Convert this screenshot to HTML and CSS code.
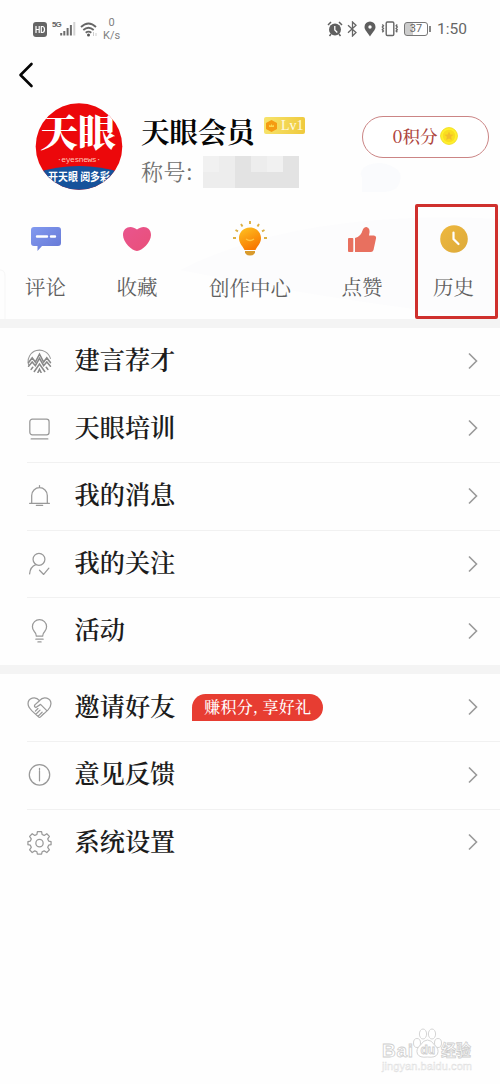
FILE: index.html
```html
<!DOCTYPE html>
<html lang="zh-CN">
<head>
<meta charset="utf-8">
<title>天眼会员</title>
<link rel="stylesheet" href="styles.css">
</head>
<body>
<main class="screen">
  <header class="status">
    <svg class="hd" width="14" height="15" viewBox="0 0 14 15"><rect width="14" height="15" rx="3" fill="#656565"/><path d="M3 4v7M6.200 4v7M3 7.500h3.200M8.300 4.500v6h1q2.200 0 2.200-3t-2.200-3z" fill="none" stroke="#fff" stroke-width="1.200"/></svg>
    <span class="net">5G</span>
    <svg class="signal" width="16" height="14" viewBox="0 0 16 14"><path d="M1.200 11v2.500M4.300 9v4.500M7.600 6v7.500M10.900 3v10.500" stroke="#6c6c6c" stroke-width="2"/><path d="M14.300 0v13.500" stroke="#d2d2d2" stroke-width="2"/></svg>
    <svg class="wifi" width="18" height="15" viewBox="0 0 18 15"><g fill="none" stroke="#666" stroke-width="1.800"><path d="M1 5q7.500-7 15 0M3.300 8q5.200-4.500 10.400 0M5.700 10.800q2.800-2.300 5.600 0"/></g><circle cx="8.500" cy="13" r="1.500" fill="#555"/><path d="M13.500 10v4M16 11v3" stroke="#ccc"/></svg>
    <span class="speed"><span>0</span><span>K/s</span></span>
    <span class="status-right">
      <svg width="16" height="16" viewBox="0 0 16 16"><circle cx="8" cy="8.500" r="6" fill="#606060"/><path d="M1 4l3-3M15 4l-3-3M4 13l-1.500 2M12 13l1.500 2" stroke="#606060" stroke-width="1.500"/><path d="M7.800 5v4l2.500 2.500" fill="none" stroke="#fff" stroke-width="1.300"/></svg>
      <svg class="bt" width="11" height="16" viewBox="0 0 11 16"><path d="M1 4.300l8 7.200-3.500 3.500V1l3.500 3.300-8 7.400" fill="none" stroke="#666" stroke-width="1.300"/></svg>
      <svg class="pin" width="12" height="16" viewBox="0 0 12 16"><path d="M6 .5a5.500 5.500 0 0 1 5.500 5.500C11.500 9 8 12 6 15.500 4 12 .5 9 .5 6A5.500 5.500 0 0 1 6 .5z" fill="#5e5e5e"/><circle cx="6" cy="6" r="1.700" fill="#fff"/></svg>
      <svg class="vibrate" width="18" height="16" viewBox="0 0 18 16"><rect x="5.200" y="1" width="7.600" height="13.500" rx="1.200" fill="none" stroke="#666" stroke-width="1.400"/><path d="M1.300 3.500l1.200 1.300-1.200 1.300 1.200 1.300-1.200 1.300 1.200 1.300-1.200 1.300M16.300 3.500l-1.200 1.300 1.200 1.300-1.200 1.300 1.200 1.300-1.200 1.300 1.200 1.300" fill="none" stroke="#666" stroke-width="1.300"/></svg>
      <span class="battery">37</span><i class="battery-tip"></i>
      <span class="time">1:50</span>
    </span>
  </header>

  <nav class="back"><svg width="16" height="26" viewBox="0 0 16 26"><path d="M13.500 2L2.500 13l11 11" fill="none" stroke="#050505" stroke-width="2.600" stroke-linecap="round" stroke-linejoin="round"/></svg></nav>

  <section class="profile">
    <svg class="avatar" width="88" height="88" viewBox="0 0 88 88">
      <defs><clipPath id="disc"><circle cx="44" cy="43.500" r="43.300"/></clipPath></defs>
      <g clip-path="url(#disc)"><rect width="88" height="88" fill="#ec080b"/><path d="M0 70Q44 56 88 70V88H0z" fill="#16529b"/>
      <text class="brand" x="5" y="43" textLength="76">天眼</text>
      <text class="news" x="22" y="59" textLength="44">·eyesnews·</text>
      <text class="slogan" x="13" y="78" textLength="62" lengthAdjust="spacingAndGlyphs">开天眼 阅多彩</text></g>
    </svg>
    <div class="who">
      <div class="name-line"><h1>天眼会员</h1>
        <span class="level"><svg width="11" height="12" viewBox="0 0 11 12"><path d="M5.500 0L11 3v6l-5.500 3L0 9V3z" fill="#f59b12"/><path d="M3 7V4.800l1.400 1L5.500 4l1.100 1.800L8 4.800V7z" fill="#fbd64a"/></svg>Lv1</span></div>
      <div class="title-line"><span>称号:</span>
        <span class="mosaic"><i></i><i></i><i></i><i></i><i></i><i></i><i></i><i></i><i></i><i></i><i></i><i></i></span></div>
    </div>
    <div class="points"><span>0积分</span><svg width="18" height="18" viewBox="0 0 18 18"><circle cx="9" cy="9" r="8.400" fill="#fff02c" stroke="#f2df2a"/><circle cx="9" cy="9" r="6.200" fill="#f9dd20"/><path d="M9 4.500l1.300 2.900 3.200.3-2.400 2.100.7 3.200L9 11.400 6.200 13l.7-3.200-2.400-2.100 3.200-.3z" fill="#f3bd2b"/></svg></div>
  </section>

  <section class="tabs">
    <svg class="scenery" width="500" height="130" viewBox="0 0 500 130"><path d="M180 66Q300 5 500 15V115Q350 100 180 66z" fill="#fcfcfd"/><path d="M362-12V-26Q358-34 368-39Q382-44 393-37Q404-32 399-20Q396-12 381-12z" fill="#fafbfd"/><path d="M0 66q5 0 5 6v43" fill="none" stroke="#f6f6f6"/></svg>
    <a class="tab"><svg width="32" height="26" viewBox="0 0 32 26"><defs><linearGradient id="blue" x2="1" y2="1"><stop stop-color="#829af0"/><stop offset="1" stop-color="#6577d4"/></linearGradient></defs><path d="M4 1h24q3 0 3 3v13q0 3-3 3H12l-4.500 5V20H4q-3 0-3-3V4q0-3 3-3z" fill="url(#blue)"/><path d="M7 10.500h10M21 10.500h4" stroke="#fff" stroke-width="2.400" stroke-linecap="round"/></svg><span>评论</span></a>
    <a class="tab"><svg width="30" height="26" viewBox="0 0 30 26"><defs><linearGradient id="pink" x2="1" y2="1"><stop stop-color="#e9558e"/><stop offset="1" stop-color="#e94f79"/></linearGradient></defs><path d="M15 3.500C21-1.500 29 1 29 9c0 7-9 16-14 16S1 16 1 9C1 1 9-1.500 15 3.500z" fill="url(#pink)"/></svg><span>收藏</span></a>
    <a class="tab center"><svg width="36" height="36" viewBox="0 0 36 36"><defs><linearGradient id="orange" x2=".5" y2="1"><stop stop-color="#ffc423"/><stop offset="1" stop-color="#f87900"/></linearGradient></defs><path d="M18 6.500c7 0 11 5.300 11 10.500 0 5.500-3.500 7.500-5.500 12h-11c-2-4.500-5.500-6.500-5.500-12C7 11.800 11 6.500 18 6.500z" fill="url(#orange)"/><path d="M14 18q4 3 8 0" fill="none" stroke="#ffc642" stroke-width="1.300"/><path d="M13 30h10v1.500q-1 3-5 3t-5-3z" fill="#d99a2c"/><path d="M1 17h3M32 17h3M3.500 9l2.500 1.300M32.500 9L30 10.300M9 3l1.500 2.500M27 3l-1.500 2.500M18 0v3" stroke="#ddb044" stroke-width="1.900"/></svg><span>创作中心</span></a>
    <a class="tab"><svg width="30" height="28" viewBox="0 0 30 28"><path d="M2 13h3.500q.8 0 .8 1v12q0 1-.8 1H2q-1 0-1-1V14q0-1 1-1zM8 13q6-1.500 7.500-7.500Q16.500 2 19.500 2q4.500 1 2.500 8.500h5q2.500.5 2 3L26.500 25q-.7 2-2.500 2H8z" fill="#e8705f"/></svg><span>点赞</span></a>
    <a class="tab history"><svg width="28" height="28" viewBox="0 0 28 28"><defs><linearGradient id="gold" x2="1" y2="1"><stop stop-color="#eeb83e"/><stop offset="1" stop-color="#ddaa3b"/></linearGradient></defs><circle cx="14" cy="14" r="13.800" fill="url(#gold)"/><path d="M13.500 7.500V14l5 5" fill="none" stroke="#fff" stroke-width="2.200" stroke-linecap="round"/></svg><span>历史</span></a>
  </section>

  <section class="menu">
    <a class="row"><svg class="glyph" viewBox="0 0 24 24"><path d="M1.500 16A10.700 10.700 0 1 1 22.500 10" fill="none" stroke="#999" stroke-width="1"/><g fill="none" stroke="#888" stroke-width="1.500" stroke-linejoin="miter"><path d="M1.500 14l3.500-4.500 3 4L12 6l4 7.500 3-4 3.500 4.500M1.500 17.500L5 13.500l3 3.500 4-7 4 7 3-3.500 3.500 4M4 20.500l1.500-2M7 22.500l5-7 5 7M10.500 23.500l1.500-3 1.500 3M20 20.500l-1.500-2"/></g></svg><span>建言荐才</span><svg class="arrow" viewBox="0 0 10 18"><path d="M1 1.500L8.500 9 1 16.500"/></svg></a>
    <a class="row"><svg class="glyph" viewBox="0 0 24 24"><rect x="2.700" y="3" width="18.500" height="15" rx="2.500"/><path d="M4 22h16"/></svg><span>天眼培训</span><svg class="arrow" viewBox="0 0 10 18"><path d="M1 1.500L8.500 9 1 16.500"/></svg></a>
    <a class="row"><svg class="glyph" viewBox="0 0 24 24"><path d="M4.500 19.500V12a7.500 7.500 0 0 1 15 0v7.500M2.500 19.500h19M12 2.500v2M9 21.500h6"/></svg><span>我的消息</span><svg class="arrow" viewBox="0 0 10 18"><path d="M1 1.500L8.500 9 1 16.500"/></svg></a>
    <a class="row"><svg class="glyph" viewBox="0 0 24 24"><circle cx="11.500" cy="8" r="5.700"/><path d="M2.500 22q.5-7 6-9M12 18.500l4 4 5-6"/></svg><span>我的关注</span><svg class="arrow" viewBox="0 0 10 18"><path d="M1 1.500L8.500 9 1 16.500"/></svg></a>
    <a class="row"><svg class="glyph" viewBox="0 0 24 24"><path d="M9 17.500q0-2.500-2-4.500A6.800 6.800 0 1 1 17 13q-2 2-2 4.500zM8.500 20.300h7M10.500 23h3"/></svg><span>活动</span><svg class="arrow" viewBox="0 0 10 18"><path d="M1 1.500L8.500 9 1 16.500"/></svg></a>
  </section>

  <section class="menu second">
    <a class="row"><svg class="glyph" viewBox="0 0 24 24"><path d="M12 5.500C8 .5 1 3 1 8.500c0 3 2 5 4 7l6 5.500q1 1 2 0l7-6.500c2-2 3-4 3-6 0-5.500-7-8-11-3L7.500 9.500q-1 2 1 2.500L13 9l6 6M8 15.500l2.500-2.500M8.500 18.500l4-4M10.500 20.500l4-4M13 21l3-3"/></svg><span>邀请好友</span><em>赚积分, 享好礼</em><svg class="arrow" viewBox="0 0 10 18"><path d="M1 1.500L8.500 9 1 16.500"/></svg></a>
    <a class="row"><svg class="glyph" viewBox="0 0 24 24"><circle cx="12" cy="12.300" r="9.800"/><path d="M12 6v1.500M12 8.500v9.500"/></svg><span>意见反馈</span><svg class="arrow" viewBox="0 0 10 18"><path d="M1 1.500L8.500 9 1 16.500"/></svg></a>
    <a class="row"><svg class="glyph" viewBox="0 0 24 24"><path d="M10 1.500h4l.5 2.800 2 .9 2.500-1.600 2.500 2.500-1.600 2.500.9 2 2.300.5v3l-2.300.5-.9 2 1.600 2.500-2.500 2.500-2.500-1.600-2 .9-.5 2.300h-4l-.5-2.300-2-.9L5 21.600l-2.500-2.500 1.600-2.500-.9-2-2.300-.5v-3l2.300-.5.9-2-1.600-2.500L5 3.600l2.500 1.600 2-.9z"/><circle cx="12" cy="12.600" r="3.500"/></svg><span>系统设置</span><svg class="arrow" viewBox="0 0 10 18"><path d="M1 1.500L8.500 9 1 16.500"/></svg></a>
  </section>

  <footer class="watermark">
    <svg width="96" height="48" viewBox="0 0 96 48">
      <g fill="#fff" stroke="#d5d5d5"><ellipse cx="37" cy="17" rx="3.500" ry="4.500"/><ellipse cx="43" cy="8" rx="3.600" ry="5"/><ellipse cx="52" cy="8" rx="3.600" ry="5"/><ellipse cx="58" cy="17" rx="3.500" ry="4.500"/><path d="M47.500 14q4 0 7 5 5 4 3 9-2 4-10 3-8 1-10-3-2-5 3-9 3-5 7-5z"/></g>
      <text class="wm-logo" x="2" y="31" textLength="31">Bai</text><text class="wm-du" x="40.500" y="28">du</text><text class="wm-cn" x="61" y="30" textLength="30" lengthAdjust="spacingAndGlyphs">经验</text>
      <text class="wm-url" x="2" y="44" textLength="90">jingyan.baidu.com</text>
    </svg>
  </footer>
</main>
</body>
</html>
```

FILE: styles.css
```css
*, *::after { box-sizing: border-box; }
body { margin: 0; background: #fefefe; }
svg { display: block; flex: none; }
.screen {
  display: flex;
  flex-direction: column;
  width: 500px;
  height: 1084px;
  overflow: hidden;
  font-family: "Noto Serif CJK SC", "Liberation Serif", "Noto Sans CJK SC", serif;
}

.status {
  display: flex;
  align-items: center;
  height: 56px;
  padding: 2px 32px 0 33px;
  color: #666;
  font-family: Roboto, "Noto Sans", sans-serif;
}
.net { margin: -10px 0 0 5px; width: 8px; font: bold 8px "Liberation Sans", sans-serif; letter-spacing: -1px; }
.signal { margin: 0; }
.wifi { margin-left: 4px; }
.speed { display: flex; flex-direction: column; align-items: center; margin-left: 5px; font-size: 11px; line-height: 13px; color: #808080; }
.status-right { display: flex; align-items: center; margin-left: auto; }
.bt { margin-left: 4px; }
.pin { margin-left: 6px; }
.vibrate { margin-left: 5px; }
.battery { width: 24px; height: 14px; margin-left: 5px; border: 1.500px solid #777; border-radius: 3px; background: linear-gradient(90deg, #ccc 35%, #fff 35%); font-size: 11px; line-height: 12px; text-align: center; }
.battery-tip { width: 2px; height: 6px; margin-left: 1px; background: #888; }
.time { width: 31px; margin-left: 6px; font-size: 15.500px; line-height: 20px; }

.back { height: 44px; padding: 6px 0 0 18px; }

.profile { display: flex; height: 104px; padding: 3px 11px 0 35px; }
.brand { fill: #fff; font: 900 38px "Noto Serif CJK SC", "Noto Sans CJK SC", serif; }
.news { fill: #ffc7b7; font: 8px "Liberation Mono", monospace; }
.slogan { fill: #fff; font: bold 11px "Noto Sans CJK SC", sans-serif; }
.who { margin: 10px 0 0 18px; }
.name-line, .title-line { display: flex; }
.name-line { height: 36px; }
h1 { margin: 0; font-size: 28.500px; line-height: 35px; font-weight: 700; color: #050505; }
.level { display: flex; align-items: center; width: 41px; height: 17px; margin: 4px 0 0 9px; padding-left: 2px; gap: 4px; border-radius: 2px; background: linear-gradient(100deg, #f7e46c, #efc93c); color: #fffbe4; font: 14px "Liberation Serif", serif; }
.title-line { align-items: center; height: 42px; font-size: 22px; color: #707070; white-space: pre; }
.title-line > span:first-child { width: 56px; letter-spacing: .4px; }
.mosaic { display: grid; grid-template-columns: repeat(6, 16px); grid-template-rows: 16px 16px; margin: 4px 0 0 6px; }
.mosaic i { background: #ededed; }
.mosaic i:nth-child(3n) { background: #e3e3e3; }
.mosaic i:nth-child(4n + 1) { background: #f1f1f1; }
.mosaic i:nth-child(n + 9) { background: #e3e3e3; }
.points { display: flex; align-items: center; justify-content: center; gap: 3px; width: 127px; height: 42px; margin: 13px 0 0 auto; padding: 0 5px 2px; border: 1px solid #cb8585; border-radius: 21px; background: #fff; color: #ae4540; font-size: 17.500px; font-weight: 500; line-height: 28px; flex: none; }

.tabs { position: relative; display: grid; grid-template-columns: 91px 92px 134px 90px 93px; height: 115px; }
.scenery { position: absolute; inset: 0; overflow: visible; z-index: -1; }
.tab { position: relative; display: grid; grid-template-rows: 70px 24px; align-content: start; justify-items: center; align-items: center; font-size: 20.500px; line-height: 24px; color: #606060; }
.tab.center { grid-template-rows: 70px 26px; }
.history::after { content: ""; position: absolute; left: 8px; top: 0; width: 83px; height: 115px; border: 3px solid #cf302d; border-radius: 2px; }

.menu { border-top: 9px solid #f4f4f4; }
.row { display: flex; align-items: center; height: 67.600px; padding: 0 22px 2px 27px; color: #1c1c1c; font-size: 25.200px; font-weight: 600; line-height: 36px; background: linear-gradient(#f1f1f1, #f1f1f1) right bottom / 473px 1px no-repeat; }
.row:last-child { background: none; }
.menu .row:last-child { height: 67px; }
.row span { margin: -5px 0 0 22.500px; }
.glyph { width: 25px; height: 25px; fill: none; stroke: #999; stroke-width: 1.200; stroke-linecap: round; stroke-linejoin: round; }
.arrow { width: 10px; height: 18px; margin-left: auto; fill: none; stroke: #999; stroke-width: 1.600; }
.row em { width: 131px; height: 27px; margin-left: 17px; border-radius: 14px 14px 14px 0; background: #e73d32; color: #fff; font-size: 16px; font-weight: 500; font-style: normal; letter-spacing: .2px; line-height: 25px; text-align: center; white-space: nowrap; }

.watermark { margin: auto 24px 10px auto; }
.wm-logo { font: bold 19px "Liberation Sans", sans-serif; }
.wm-du { font: bold 12px "Liberation Sans", sans-serif; }
.wm-cn { font: bold 16px "Noto Sans CJK SC", sans-serif; }
.wm-url { font: 11px "Liberation Sans", sans-serif; }
.wm-logo, .wm-du, .wm-cn { fill: #fff; stroke: #cecece; stroke-width: .8px; }
.wm-url { fill: #f6f6f6; stroke: #dedede; stroke-width: .4px; }
```
